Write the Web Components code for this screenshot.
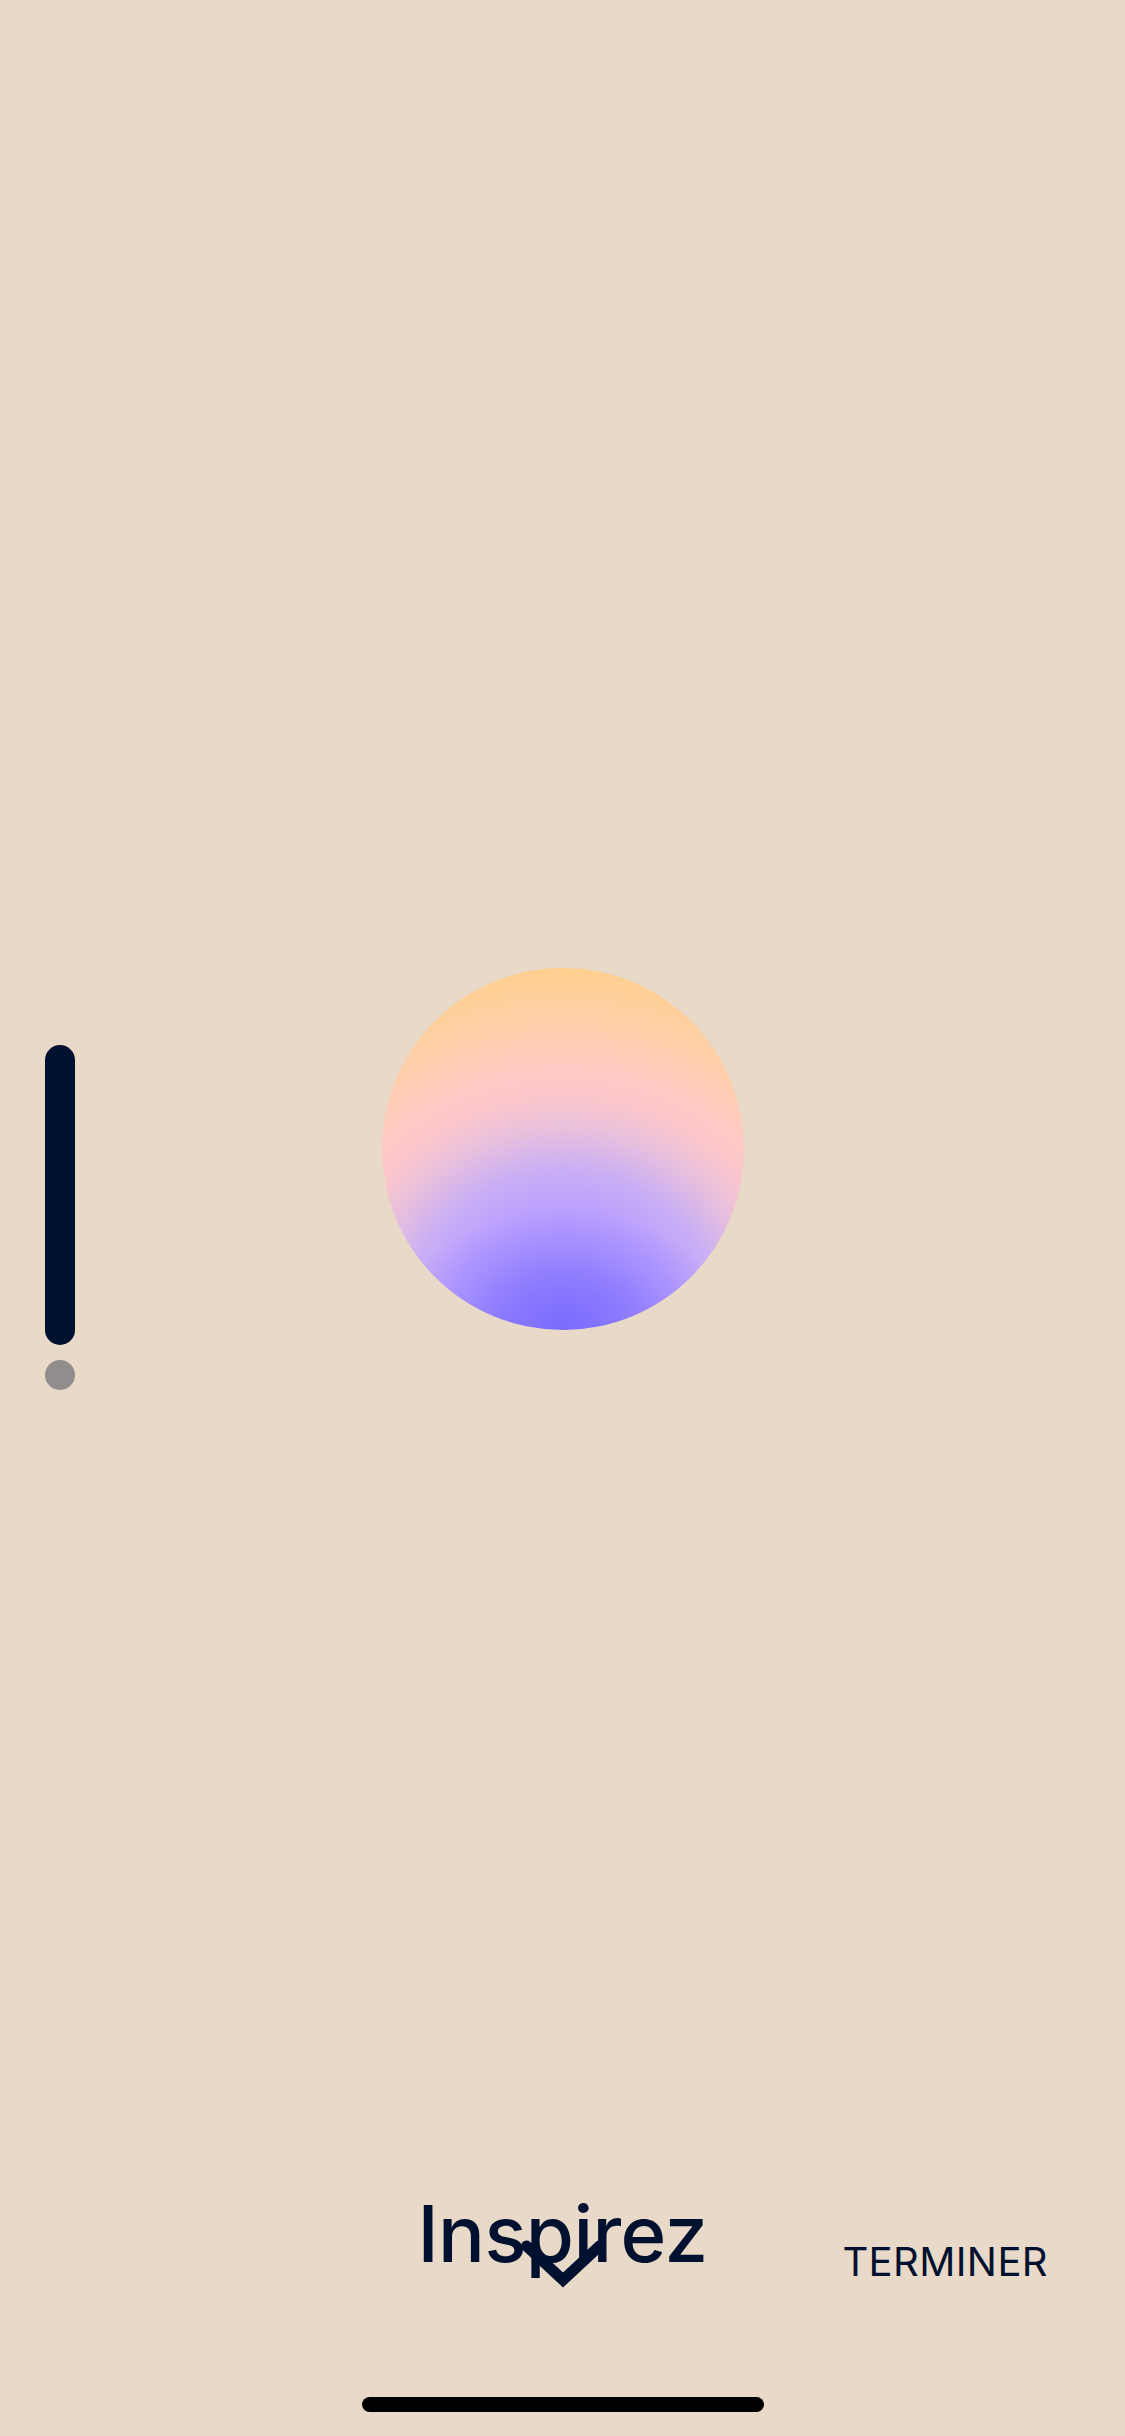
<!DOCTYPE html>
<html lang="fr">
<head>
<meta charset="utf-8">
<title>Inspirez</title>
<style>
  html, body { margin: 0; padding: 0; background: #e8d9c8; }
</style>
</head>
<body>
<breathe-screen>
  <breathe-meter slot="meter"></breathe-meter>
  <breathe-orb slot="orb"></breathe-orb>
  <breathe-footer slot="footer" label="Inspirez" action="TERMINER"></breathe-footer>
</breathe-screen>

<script>
class BreatheScreen extends HTMLElement {
  constructor() {
    super();
    this.attachShadow({ mode: "open" });
    this.shadowRoot.innerHTML = `
      <style>
        :host {
          display: flex;
          flex-direction: column;
          width: 1125px;
          height: 2436px;
          background: #e8d9c8;
          color: #00102f;
          font-family: Inter, "Liberation Sans", sans-serif;
        }
        .stage {
          flex: 1;
          display: grid;
          grid-template-columns: 382px 362px 1fr;
          padding-top: 968px;
          box-sizing: border-box;
        }
        .left { padding: 77px 0 0 45px; }
        .home {
          align-self: center;
          width: 402px;
          height: 15px;
          margin-top: 107px;
          margin-bottom: 24px;
          border-radius: 8px;
          background: #000;
        }
      </style>
      <div class="stage">
        <div class="left"><slot name="meter"></slot></div>
        <div><slot name="orb"></slot></div>
      </div>
      <slot name="footer"></slot>
      <div class="home"></div>
    `;
  }
}

class BreatheMeter extends HTMLElement {
  constructor() {
    super();
    this.attachShadow({ mode: "open" });
    this.shadowRoot.innerHTML = `
      <style>
        :host { display: flex; flex-direction: column; gap: 15px; width: 30px; }
        .bar { height: 300px; border-radius: 15px; background: #00102f; }
        .dot { height: 30px; border-radius: 50%; background: #918d8c; }
      </style>
      <div class="bar"></div>
      <div class="dot"></div>
    `;
  }
}

class BreatheOrb extends HTMLElement {
  constructor() {
    super();
    this.attachShadow({ mode: "open" });
    this.shadowRoot.innerHTML = `
      <style>
        :host {
          display: block;
          width: 362px;
          height: 362px;
          border-radius: 50%;
          background:
            radial-gradient(ellipse 170px 120px at 50% 100%,
              #7a6cff 0,
              rgba(122, 108, 255, 0.65) 35%,
              rgba(122, 108, 255, 0.25) 68%,
              rgba(122, 108, 255, 0) 100%),
            radial-gradient(circle 362px at 50% 100%,
              #a08cff 0,
              #a890ff 16%,
              #b99fff 32%,
              #c9aef5 44%,
              #e9c0dc 56%,
              #fac6cc 64%,
              #ffcac4 72%,
              #ffd0a8 86%,
              #ffcf8e 100%);
        }
      </style>
    `;
  }
}

class BreatheFooter extends HTMLElement {
  constructor() {
    super();
    this.attachShadow({ mode: "open" });
    this.shadowRoot.innerHTML = `
      <style>
        :host {
          display: grid;
          grid-template-columns: 1fr auto 1fr;
          height: 112px;
        }
        .title {
          grid-column: 2;
          position: relative;
          font-size: 78px;
          font-weight: 450;
          line-height: 112px;
          letter-spacing: -0.6px;
        }
        svg {
          position: absolute;
          left: 50%;
          top: 60px;
          margin-left: -45px;
          width: 90px;
          height: 56px;
        }
        .action {
          align-self: end;
          justify-self: end;
          margin: 0 77px 8px 0;
          font-size: 40px;
          font-weight: 400;
          line-height: 40px;
          letter-spacing: 0.4px;
        }
      </style>
      <div class="title">
        <span id="label"></span>
        <svg viewBox="0 0 90 56" fill="none" stroke="#00102f" stroke-width="11" stroke-linecap="round" stroke-linejoin="miter">
          <path d="M8.5 8 L45 42 L81.5 8"/>
        </svg>
      </div>
      <div class="action" id="action"></div>
    `;
    this.shadowRoot.getElementById("label").textContent = this.getAttribute("label");
    this.shadowRoot.getElementById("action").textContent = this.getAttribute("action");
  }
}

customElements.define("breathe-screen", BreatheScreen);
customElements.define("breathe-meter", BreatheMeter);
customElements.define("breathe-orb", BreatheOrb);
customElements.define("breathe-footer", BreatheFooter);
</script>
</body>
</html>
